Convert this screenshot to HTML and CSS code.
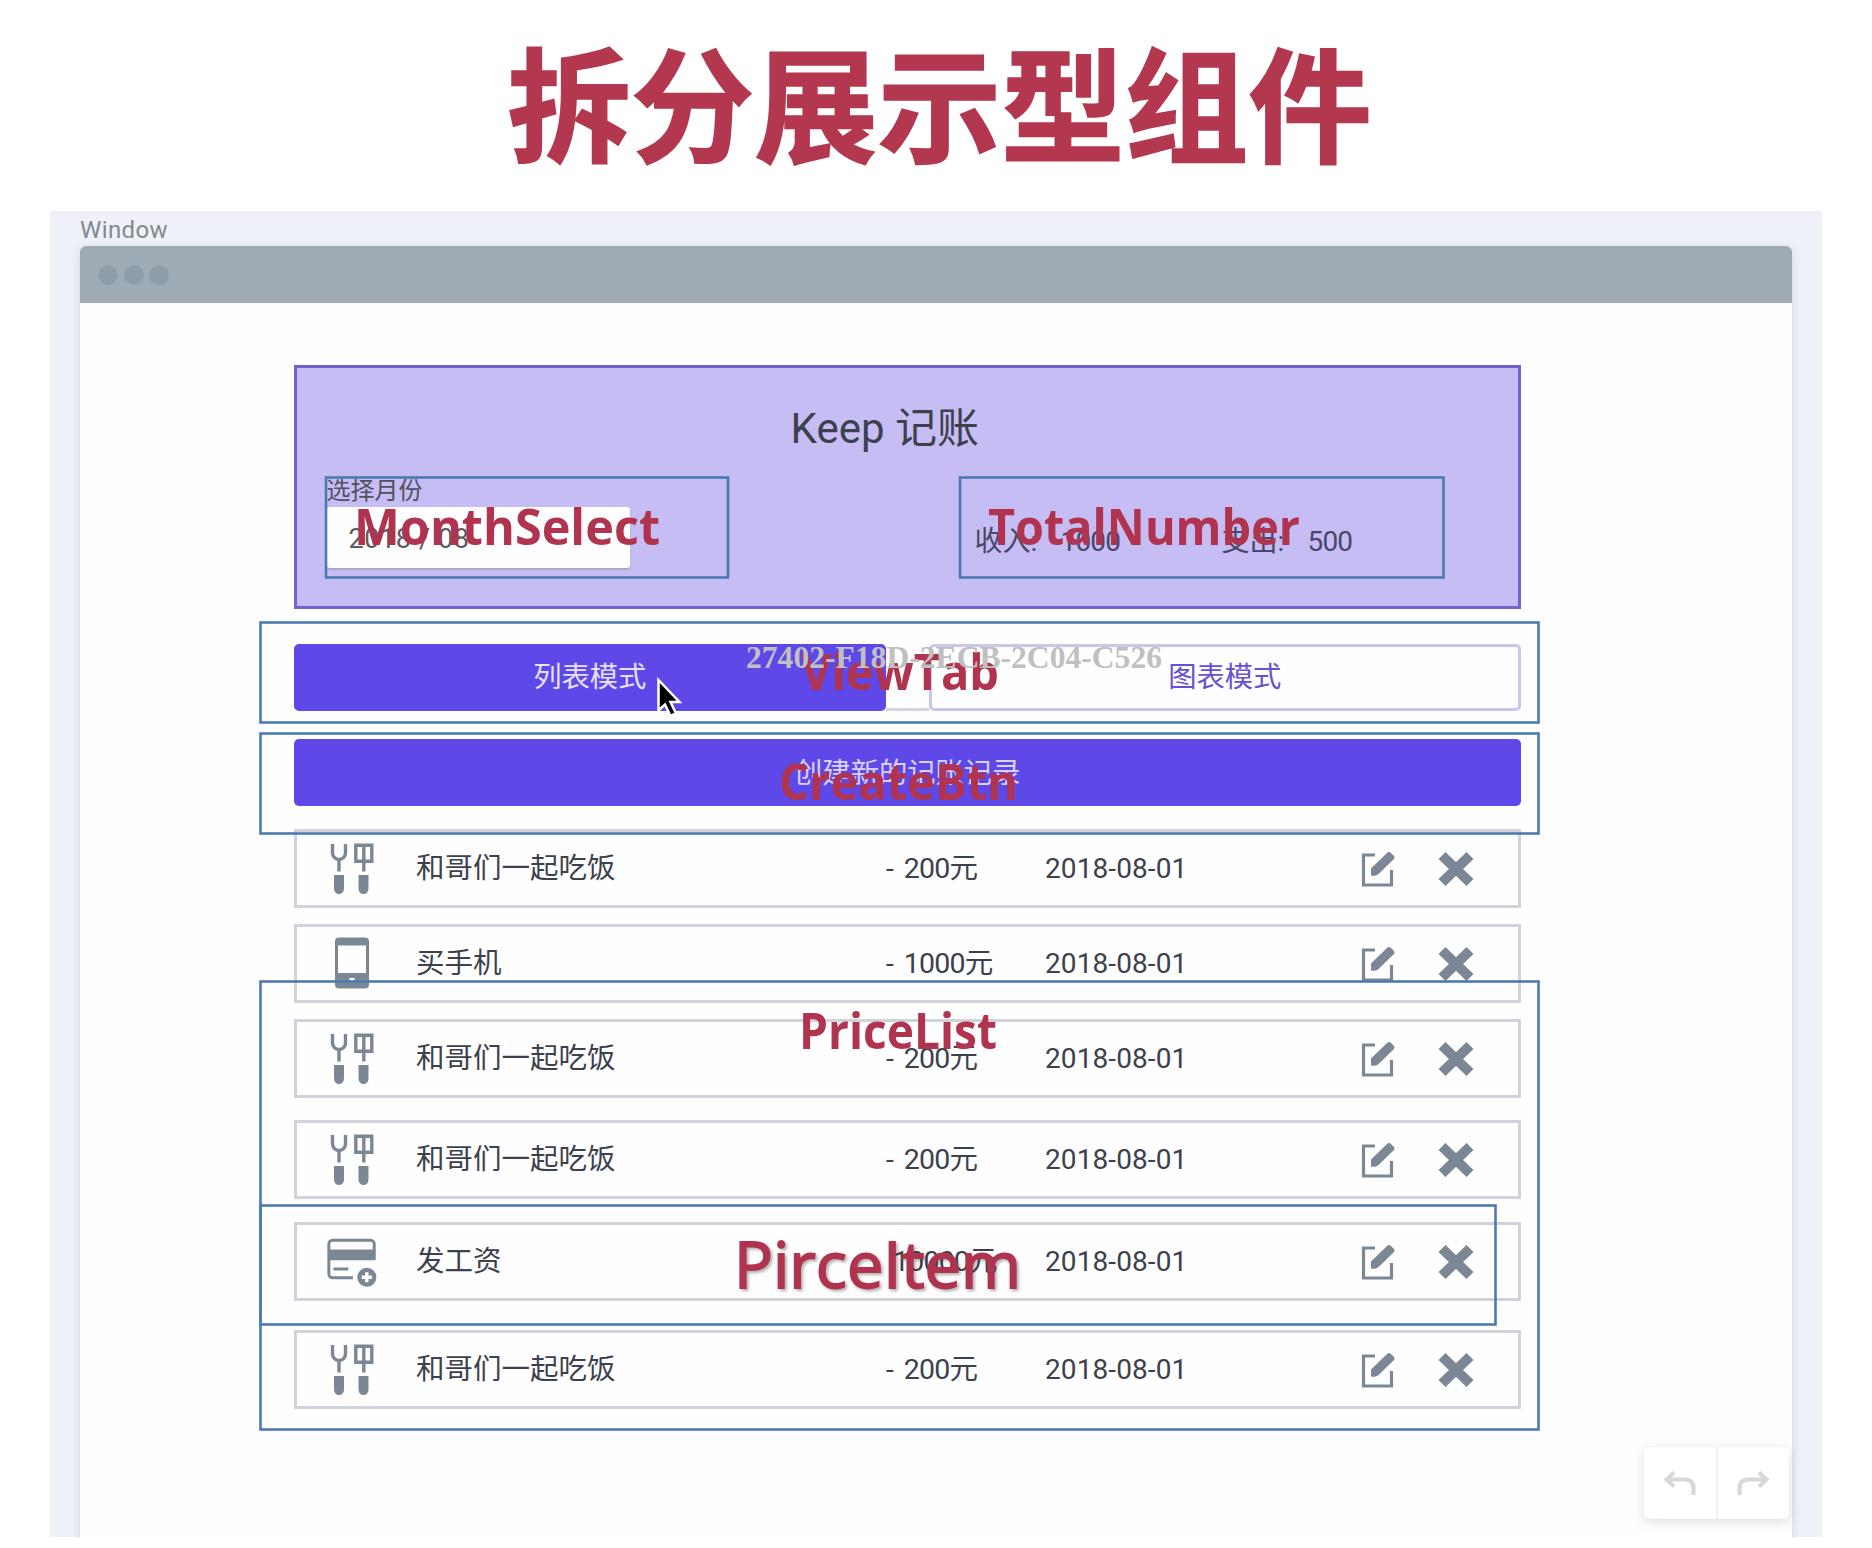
FILE: index.html
```html
<!DOCTYPE html>
<html lang="zh-CN">
<head>
<meta charset="utf-8">
<title>拆分展示型组件</title>
<link rel="stylesheet" href="styles.css">
</head>
<body>
<svg class="symbols" aria-hidden="true">
  <symbol id="food" viewBox="0 0 50 54">
    <path d="M5.500 2v9a6.500 6.500 0 0 0 13 0V2M12 17.500v12M28.800 3.200h16v16H28.800zM36.800 3.500v26" fill="none" stroke="currentColor" stroke-width="3.400"/>
    <path d="M7 33h10v13.500a5 5.500 0 0 1-10 0zM31.500 33h10v13.500a5 5.500 0 0 1-10 0z" fill="currentColor"/>
  </symbol>
  <symbol id="phone" viewBox="0 0 50 54">
    <path fill="currentColor" fill-rule="evenodd" d="M12 .500h26a4 4 0 0 1 4 4v43a4 4 0 0 1-4 4H12a4 4 0 0 1-4-4v-43a4 4 0 0 1 4-4zM11 8.500v27.500h28V8.500zM22.500 41v3h5v-3z"/>
  </symbol>
  <symbol id="card" viewBox="0 0 54 54">
    <path d="M28 44H6a4 4 0 0 1-4-4V7.500a4 4 0 0 1 4-4h41a4 4 0 0 1 4 4v17M7 34.500h16" fill="none" stroke="currentColor" stroke-width="3.200"/>
    <path d="M2 13.500h50V25H2z" fill="currentColor"/>
    <circle cx="43" cy="43.500" r="10.300" fill="currentColor"/>
    <path d="M43 38v11M37.500 43.500h11" stroke="#fff" stroke-width="3.600"/>
  </symbol>
  <symbol id="edit" viewBox="0 0 36 38">
    <path d="M15 5H3.500v30h28V20" fill="none" stroke="currentColor" stroke-width="3.200"/>
    <path d="M11 25.500v-7L27.500 2.500q1.500-1.200 3 0l3.500 3.500q1.200 1.500 0 3L18 24.500q-3 2-7 1z" fill="currentColor"/>
  </symbol>
  <symbol id="cross" viewBox="0 0 36 36">
    <path d="M4 4.500l28 27M32 4.500l-28 27" stroke="currentColor" stroke-width="10"/>
  </symbol>
</svg>

<h1 class="headline">拆分展示型组件</h1>

<main class="canvas">
  <div class="window-label">Window</div>
  <section class="window">
    <div class="titlebar"><i class="dot"></i><i class="dot"></i><i class="dot"></i></div>
    <div class="content">
      <header class="panel">
        <h2 class="app-name">Keep 记账</h2>
        <div class="panel-row">
          <div class="month">
            <label class="month-label">选择月份</label>
            <div class="month-input">2018 / 08</div>
          </div>
          <div class="totals">
            <div class="total income"><span>收入:</span><b>1000</b></div>
            <div class="total"><span>支出:</span><b>500</b></div>
          </div>
        </div>
      </header>

      <nav class="tabs">
        <a class="tab active">列表模式</a>
        <span class="tab-gap"></span>
        <a class="tab">图表模式</a>
      </nav>

      <a class="create">创建新的记账记录</a>

      <div class="list">
        <div class="item"><svg class="kind"><use href="#food"/></svg><span>和哥们一起吃饭</span><span class="price">- 200元</span><span class="date">2018-08-01</span><svg class="edit"><use href="#edit"/></svg><svg class="cross"><use href="#cross"/></svg></div>
        <div class="item"><svg class="kind"><use href="#phone"/></svg><span>买手机</span><span class="price">- 1000元</span><span class="date">2018-08-01</span><svg class="edit"><use href="#edit"/></svg><svg class="cross"><use href="#cross"/></svg></div>
        <div class="item"><svg class="kind"><use href="#food"/></svg><span>和哥们一起吃饭</span><span class="price">- 200元</span><span class="date">2018-08-01</span><svg class="edit"><use href="#edit"/></svg><svg class="cross"><use href="#cross"/></svg></div>
        <div class="item spaced"><svg class="kind"><use href="#food"/></svg><span>和哥们一起吃饭</span><span class="price">- 200元</span><span class="date">2018-08-01</span><svg class="edit"><use href="#edit"/></svg><svg class="cross"><use href="#cross"/></svg></div>
        <div class="item spaced"><svg class="kind"><use href="#card"/></svg><span>发工资</span><span class="price salary">10000元</span><span class="date">2018-08-01</span><svg class="edit"><use href="#edit"/></svg><svg class="cross"><use href="#cross"/></svg></div>
        <div class="item last"><svg class="kind"><use href="#food"/></svg><span>和哥们一起吃饭</span><span class="price">- 200元</span><span class="date">2018-08-01</span><svg class="edit"><use href="#edit"/></svg><svg class="cross"><use href="#cross"/></svg></div>
      </div>
    </div>
  </section>
</main>

<div class="history">
  <span class="history-btn"><svg viewBox="0 0 34 26"><path d="M11 2.500L3.500 9.500 11 16.500M4 9.500h17.500q9 0 9 9V25"/></svg></span>
  <span class="history-btn"><svg viewBox="0 0 34 26"><path d="M23 2.500l7.500 7-7.500 7M30 9.500H12.500q-9 0-9 9V25"/></svg></span>
</div>

<svg class="notes" viewBox="0 0 1872 1548">
  <g class="frames">
    <rect x="326" y="477.500" width="402" height="100"/>
    <rect x="960" y="477.500" width="483.500" height="100"/>
    <rect x="260.500" y="622.500" width="1278" height="100"/>
    <rect x="260.500" y="733.500" width="1278" height="100"/>
    <rect x="260.500" y="981.500" width="1278" height="448"/>
    <rect x="260.500" y="1205.500" width="1235" height="119"/>
  </g>
  <g class="names">
    <text x="354" y="545" textLength="306" lengthAdjust="spacingAndGlyphs">MonthSelect</text>
    <text x="988" y="545" textLength="312" lengthAdjust="spacingAndGlyphs">TotalNumber</text>
    <text x="801" y="690" textLength="198" lengthAdjust="spacingAndGlyphs">ViewTab</text>
    <text x="779" y="800" textLength="239" lengthAdjust="spacingAndGlyphs">CreateBtn</text>
    <text x="799" y="1048.500" textLength="198" lengthAdjust="spacingAndGlyphs">PriceList</text>
    <text class="thin" x="734" y="1287.500" textLength="287" lengthAdjust="spacingAndGlyphs">PirceItem</text>
  </g>
  <text class="serial" x="746" y="668" textLength="416" lengthAdjust="spacingAndGlyphs">27402-F18D-2ECB-2C04-C526</text>
  <path class="pointer" d="M658.500 680v30.500l6.500-6 5.500 11.500 5.500-2.500-5.500-11.500h9z"/>
</svg>
</body>
</html>
```

FILE: styles.css
```css
* { box-sizing: border-box; }

body {
  margin: 0;
  width: 1872px;
  height: 1548px;
  position: relative;
  overflow: hidden;
  background: #fff;
  color: #3d414d;
  font-family: Roboto, "Noto Sans CJK SC", sans-serif;
  font-size: 28px;
}

.symbols { display: none; }

.headline {
  margin: 0;
  height: 211px;
  padding-left: 7px;
  text-align: center;
  font: 700 123.5px/200px "Noto Sans CJK SC", sans-serif;
  color: #b3384f;
  -webkit-text-stroke: 1.6px #b3384f;
}

.canvas {
  margin: 0 50px;
  height: 1326px;
  padding: 0 30px;
  background: #eef1f7;
  overflow: hidden;
}

.window-label {
  height: 35px;
  line-height: 38px;
  font-size: 24px;
  letter-spacing: 0.4px;
  color: #84888f;
}

.window {
  height: 1300px;
  background: #fefefe;
  border-radius: 6px 6px 0 0;
  box-shadow: 0 2px 8px rgba(90, 100, 130, 0.2);
}

.titlebar {
  height: 57px;
  display: flex;
  align-items: center;
  gap: 5.5px;
  padding-left: 18px;
  border-radius: 6px 6px 0 0;
  background: #9facb5;
}

.dot {
  width: 20px;
  height: 20px;
  border-radius: 50%;
  background: #8f9da9;
}

.content { padding: 62px 271px 0 213.5px; }

.panel {
  height: 244px;
  padding: 0 30px;
  border: 3px solid #7560cf;
  background: #c6bdf5;
}

.app-name {
  margin: 0;
  height: 110px;
  padding: 28px 45px 0 0;
  text-align: center;
  font-size: 42px;
  font-weight: 400;
  line-height: 66px;
}

.panel-row { display: flex; }

.month { width: 303px; }

.month-label {
  display: block;
  height: 29px;
  font-size: 24px;
  line-height: 26px;
  color: #51515f;
}

.month-input {
  height: 61px;
  padding-left: 22px;
  border-radius: 3px;
  background: #fefefe;
  box-shadow: 0 2px 2px rgba(120, 120, 120, 0.35);
  font-size: 27px;
  letter-spacing: 0.6px;
  line-height: 64px;
  color: #5a5c62;
}

.totals {
  display: flex;
  padding: 42px 0 0 345px;
  line-height: 44px;
  color: #494868;
}

.total { display: flex; width: 200px; }
.total.income { width: 247px; }
.total span { width: 86px; }
.total b { font-weight: 400; letter-spacing: -0.8px; }

.tabs {
  display: flex;
  height: 67px;
  margin-top: 35px;
}

.tab {
  flex: 1;
  border: 3px solid #cdc5ee;
  border-radius: 5px;
  text-align: center;
  line-height: 62px;
  font-size: 28.3px;
  color: #6650d4;
}

.tab.active {
  border-color: #5f48e8;
  background: #5f48e8;
  color: #e6e1ff;
}

.tab-gap { width: 42.5px; border-bottom: 3px solid #d3d5de; }

.create {
  display: block;
  height: 67px;
  margin-top: 28px;
  border-radius: 5px;
  background: #5f48e8;
  text-align: center;
  line-height: 69px;
  font-size: 28.3px;
  color: #d9d2ff;
}

.list {
  display: flex;
  flex-direction: column;
  gap: 15.8px;
  margin-top: 23px;
}

.item {
  height: 79px;
  display: grid;
  grid-template-columns: 89.5px 470px 159px 315px 78px 40px;
  align-items: center;
  padding: 1px 0 0 30px;
  border: 3px solid #d0d3dc;
  font-size: 28.5px;
  line-height: 40px;
}

.spaced { margin-top: 7px; }
.last { margin-top: 13px; }

.price { letter-spacing: -0.8px; word-spacing: 4.5px; }
.salary { padding-left: 7px; }
.date { font-size: 28px; letter-spacing: 0.1px; }

.kind { width: 50px; height: 54px; color: #7b8794; }
.edit { width: 36px; height: 38px; color: #7b8794; }
.cross { width: 36px; height: 36px; color: #7b8794; }

.history {
  position: absolute;
  left: 1644px;
  top: 1447px;
  width: 145px;
  height: 72px;
  display: flex;
  border-radius: 5px;
  background: #fff;
  box-shadow: 0 3px 12px rgba(0, 0, 0, 0.13);
}

.history-btn {
  flex: 1;
  display: flex;
  align-items: center;
  justify-content: center;
}

.history-btn + .history-btn { border-left: 2px solid #f0f0f2; }

.history svg {
  width: 34px;
  height: 26px;
  fill: none;
  stroke: #d6d8dc;
  stroke-width: 4;
}

.notes {
  position: absolute;
  left: 0;
  top: 0;
  width: 1872px;
  height: 1548px;
}

.frames { fill: none; stroke: #4c7ab0; stroke-width: 2.6; }

.names { fill: #b0344f; font: 700 50px "Open Sans", sans-serif; }

.names .thin {
  font-size: 64px;
  font-weight: 500;
  stroke: #b0344f;
  stroke-width: 1.8px;
  filter: drop-shadow(2px 2px 1.5px rgba(60, 60, 60, 0.4));
}

.serial { fill: #c0c0c0; font: 700 32px "Liberation Serif", serif; }

.pointer { fill: #000; stroke: #fff; stroke-width: 2.5; }
```
